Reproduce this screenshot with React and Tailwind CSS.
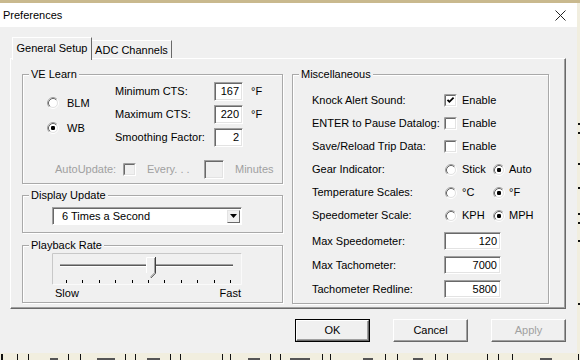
import React from 'react';

// classic win32 look-alike controls
const Radio = ({ checked }) => (
  <svg width="12" height="12" viewBox="0 0 12 12" className="shrink-0">
    <circle cx="6" cy="6" r="5.5" fill="none" stroke="#ffffff" />
    <circle cx="6" cy="6" r="4.5" fill="#ffffff" stroke="#e3e3e3" />
    <path d="M2.11 9.89 A5.5 5.5 0 0 1 9.89 2.11" fill="none" stroke="#a0a0a0" />
    <path d="M2.82 9.18 A4.5 4.5 0 0 1 9.18 2.82" fill="none" stroke="#696969" />
    {checked && <rect x="4" y="4" width="4" height="4" rx="1.2" fill="#000" />}
  </svg>
);

const Check = ({ checked, disabled }) => (
  <svg width="13" height="13" viewBox="0 0 13 13" className="shrink-0">
    <rect x="0" y="0" width="13" height="13" fill="#ffffff" />
    <rect x="1" y="1" width="11" height="11" fill="#e3e3e3" />
    <rect x="2" y="2" width="9" height="9" fill={disabled ? '#f0f0f0' : '#ffffff'} />
    <path d="M0.5 12.5 V0.5 H12.5" fill="none" stroke="#a0a0a0" />
    <path d="M1.5 11.5 V1.5 H11.5" fill="none" stroke="#696969" />
    {checked && <path d="M3.5 5.8 L5.4 7.8 L9.6 3.6" fill="none" stroke="#000" strokeWidth="1.8" />}
  </svg>
);

const Edit = ({ value, className, disabled }) => (
  <div
    className={`flex items-center justify-end pr-[3px] border border-t-[#a0a0a0] border-l-[#a0a0a0] border-r-white border-b-white shadow-[inset_1px_1px_0_#696969,inset_-1px_-1px_0_#e3e3e3] ${disabled ? 'bg-[#f0f0f0]' : 'bg-white'} ${className}`}
  >
    {value}
  </div>
);

const Button = ({ label, isDefault, disabled }) => (
  <div className={`w-[75px] h-[23px] ${isDefault ? 'border border-black' : ''}`}>
    <div
      className={`h-full flex items-center justify-center border border-t-white border-l-white border-r-[#696969] border-b-[#696969] shadow-[inset_-1px_-1px_0_#a0a0a0] ${disabled ? 'text-[#a0a0a0]' : 'text-black'}`}
    >
      {label}
    </div>
  </div>
);

const Group = ({ title, className, children }) => (
  <fieldset
    className={`border border-[#a9a9a9] shadow-[1px_1px_0_#ffffff,inset_1px_1px_0_#ffffff] ${className}`}
  >
    <legend className="ml-[6px] px-[2px] bg-[#f0f0f0] leading-[13px]">{title}</legend>
    {children}
  </fieldset>
);

const Slider = () => {
  const ticks = Array.from({ length: 11 }, (_, i) => 14 + i * 16.4);
  return (
    <svg width="190" height="32" viewBox="0 0 190 32">
      <path d="M0.5 31.5 V0.5 H189.5" fill="none" stroke="#c8c8c8" />
      <path d="M189.5 0.5 V31.5 H0.5" fill="none" stroke="#fafafa" />
      <rect x="8" y="11" width="173" height="1" fill="#a0a0a0" />
      <rect x="8" y="12" width="173" height="1" fill="#5a5a5a" />
      <rect x="8" y="13" width="173" height="1" fill="#ffffff" />
      {ticks.map((x) => (
        <rect key={x} x={Math.round(x)} y="27" width="1" height="3" fill="#000" />
      ))}
      <polygon points="94,4 104,4 104,20 99,25 94,20" fill="#f0f0f0" />
      <path d="M94.5 20 V4.5 H103" fill="none" stroke="#ffffff" />
      <path d="M103.5 4 V20.2 L98.8 25" fill="none" stroke="#404040" />
      <path d="M102.5 5 V19.8 L98.5 23.8" fill="none" stroke="#a0a0a0" />
    </svg>
  );
};

const Dialog = () => (
  <div className="w-[577px] h-[350px] bg-[#f0f0f0] flex flex-col">
    {/* title bar */}
    <div className="h-[24px] bg-white flex items-center justify-between pl-[3px] pr-[11px]">
      <span className="text-[11px]">Preferences</span>
      <svg width="11" height="11" viewBox="0 0 11 11">
        <path d="M0.5 0.5 L10.5 10.5 M10.5 0.5 L0.5 10.5" stroke="#222" strokeWidth="1" />
      </svg>
    </div>

    <div className="pt-[10px] px-[10px] flex flex-col">
      {/* tabs */}
      <div className="flex items-end pl-[2px]">
        <div className="relative z-10 h-[23px] mb-[-2px] w-[80px] bg-[#f0f0f0] border-l border-t border-r border-l-white border-t-white border-r-[#696969] flex items-start justify-center pt-[4px]">
          General Setup
        </div>
        <div className="h-[18px] w-[80px] border-t border-r border-t-white border-r-[#696969] flex items-start justify-center pt-[3px]">
          ADC Channels
        </div>
      </div>

      {/* tab panel */}
      <div className="w-[556px] h-[251px] border border-l-white border-t-white border-r-[#696969] border-b-[#696969] shadow-[inset_-1px_-1px_0_#a0a0a0] pl-[11px] pt-[9px] flex gap-[9px]">
        <div className="w-[261px] flex flex-col">
          <Group title="VE Learn" className="h-[116px]">
            <div className="flex">
              <div className="w-[92px] pl-[24px] pt-[14px] flex flex-col gap-[9px]">
                <div className="h-[16px] flex items-center gap-[8px]">
                  <Radio />
                  <span>BLM</span>
                </div>
                <div className="h-[16px] flex items-center gap-[8px]">
                  <Radio checked />
                  <span>WB</span>
                </div>
              </div>
              <div className="pt-[1px] flex flex-col gap-[4px]">
                {[
                  ['Minimum CTS:', '167', true],
                  ['Maximum CTS:', '220', true],
                  ['Smoothing Factor:', '2', false],
                ].map(([label, v, unit]) => (
                  <div key={label} className="h-[19px] flex items-center">
                    <span className="w-[99px]">{label}</span>
                    <Edit value={v} className="w-[29px] h-[19px]" />
                    {unit && <span className="ml-[8px]">°F</span>}
                  </div>
                ))}
              </div>
            </div>
            <div className="mt-[13px] h-[19px] pl-[32px] flex items-center text-[#a0a0a0]">
              <span className="w-[68px]">AutoUpdate:</span>
              <Check disabled />
              <span className="ml-[11px] w-[57px]">Every. . .</span>
              <Edit value="" disabled className="w-[20px] h-[19px]" />
              <span className="ml-[11px]">Minutes</span>
            </div>
          </Group>

          <Group title="Display Update" className="h-[44px] mt-[5px]">
            <div className="pl-[29px] pt-[5px]">
              <div className="w-[190px] h-[18px] bg-white border border-t-[#a0a0a0] border-l-[#a0a0a0] border-r-white border-b-white shadow-[inset_1px_1px_0_#696969] flex items-center justify-between pl-[9px] pr-[1px]">
                <span>6 Times a Second</span>
                <div className="w-[13px] h-[13px] bg-[#f0f0f0] border border-t-[#e3e3e3] border-l-[#e3e3e3] border-r-[#696969] border-b-[#696969] flex items-center justify-center">
                  <svg width="7" height="4" viewBox="0 0 7 4">
                    <polygon points="0,0 7,0 3.5,4" fill="#000" />
                  </svg>
                </div>
              </div>
            </div>
          </Group>

          <Group title="Playback Rate" className="h-[64px] mt-[6px]">
            <div className="pl-[29px] pt-[1px]">
              <Slider />
              <div className="w-[186px] h-[13px] mt-[2px] ml-[3px] flex justify-between">
                <span>Slow</span>
                <span>Fast</span>
              </div>
            </div>
          </Group>
        </div>

        <Group title="Miscellaneous" className="w-[257px] h-[236px]">
          <div className="pl-[19px] pt-[8px] flex flex-col">
            {[
              ['Knock Alert Sound:', true],
              ['ENTER to Pause Datalog:', false],
              ['Save/Reload Trip Data:', false],
            ].map(([label, c]) => (
              <div key={label} className="h-[23px] flex items-center">
                <span className="w-[132px] whitespace-nowrap">{label}</span>
                <Check checked={c} />
                <span className="ml-[5px]">Enable</span>
              </div>
            ))}
            {[
              ['Gear Indicator:', 'Stick', 'Auto'],
              ['Temperature Scales:', '°C', '°F'],
              ['Speedometer Scale:', 'KPH', 'MPH'],
            ].map(([label, a, b]) => (
              <div key={label} className="h-[23px] flex items-center">
                <span className="w-[133px]">{label}</span>
                <div className="w-[48px] flex items-center gap-[5px]">
                  <Radio />
                  <span>{a}</span>
                </div>
                <div className="flex items-center gap-[4px]">
                  <Radio checked />
                  <span>{b}</span>
                </div>
              </div>
            ))}
            <div className="mt-[2px] flex flex-col">
              {[
                ['Max Speedometer:', '120'],
                ['Max Tachometer:', '7000'],
                ['Tachometer Redline:', '5800'],
              ].map(([label, v]) => (
                <div key={label} className="h-[24px] flex items-center">
                  <span className="w-[132px]">{label}</span>
                  <Edit value={v} className="w-[57px] h-[18px]" />
                </div>
              ))}
            </div>
          </div>
        </Group>
      </div>

      {/* buttons */}
      <div className="mt-[10px] pr-[1px] flex justify-end gap-[23px]">
        <Button label="OK" isDefault />
        <Button label="Cancel" />
        <Button label="Apply" disabled />
      </div>
    </div>
  </div>
);

export default function App() {
  const bottomLines = [1, 2, 17, 28, 68, 80, 125, 135, 170, 180, 222, 230, 270, 280, 322, 330, 385, 397, 435, 447, 487, 498, 512, 578];
  const bottomBlobs = [
    [50, 8], [97, 18], [147, 13], [248, 12], [290, 20], [363, 10], [413, 10], [540, 12],
  ];
  const sideMarks = [123, 132, 163, 187, 213, 222, 240, 303];
  return (
    <div className="w-[580px] h-[360px] overflow-hidden bg-[#f1eedf] flex flex-col font-['Liberation_Sans',Arial,sans-serif] text-[11px] leading-[13px] text-black">
      <div className="h-[3px] shrink-0 bg-[#c9b98e]" />
      <div className="flex shrink-0">
        <Dialog />
        <svg width="3" height="350" viewBox="0 0 3 350">
          {sideMarks.map((y) => (
            <rect key={y} x="1" y={y - 3} width="2" height="2" fill="#111" />
          ))}
        </svg>
      </div>
      <svg width="580" height="7" viewBox="0 0 580 7" className="shrink-0">
        {bottomLines.map((x) => (
          <rect key={x} x={x} y="1" width="1" height="6" fill="#111" />
        ))}
        {bottomBlobs.map(([x, w]) => (
          <rect key={x} x={x} y="5" width={w} height="2" fill="#555" />
        ))}
      </svg>
    </div>
  );
}
